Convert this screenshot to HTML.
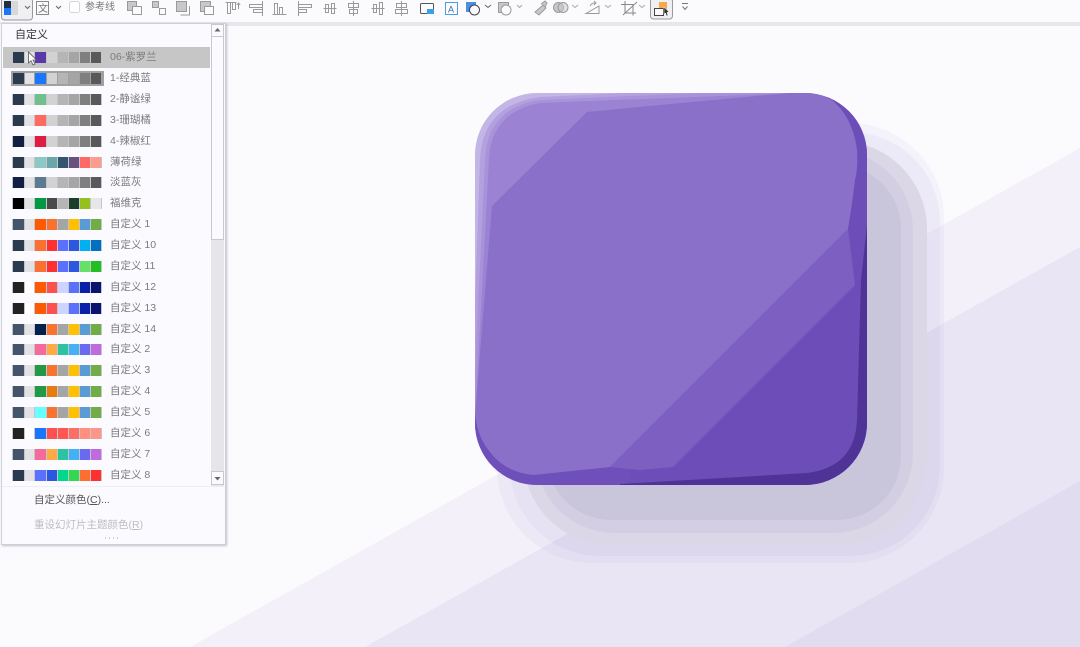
<!DOCTYPE html>
<html lang="zh">
<head>
<meta charset="utf-8">
<title>自定义主题颜色</title>
<style>
html,body{margin:0;padding:0;width:1080px;height:647px;overflow:hidden;background:#fbfafd;font-family:"Liberation Sans","Noto Sans CJK SC",sans-serif}
#art,#tb{position:absolute;left:0;top:0}
#tb{filter:blur(.3px)}
#panel{position:absolute;left:1px;top:23px;width:223px;height:520px;background:#fbfaff;border:1px solid #cfcfd8;box-shadow:1px 1px 2px rgba(90,90,110,.35)}
.h{position:absolute;left:13px;top:3px;font-size:11px;color:#333;line-height:16px}
.hl{position:absolute;left:1px;top:23px;width:207px;height:21px;background:#c6c6c6}
.r{position:absolute;left:10px;width:90px;height:11px;background:#c4c4ca}
.r i{position:absolute;top:0;height:11px;display:block}
.r i:nth-child(1){left:1px;width:11px}
.r i:nth-child(2){left:13px;width:9px}
.r i:nth-child(3){left:23px;width:11px}
.r i:nth-child(4){left:35px;width:10px}
.r i:nth-child(5){left:46px;width:10px}
.r i:nth-child(6){left:57px;width:10px}
.r i:nth-child(7){left:68px;width:10px}
.r i:nth-child(8){left:79px;width:10px}
.r.sel{left:9px;width:93px;height:15px;margin-top:-2px;background:#a0a0a0}
.r.sel i{top:2px}
.r.sel i:nth-child(n){margin-left:1px}
.t{position:absolute;left:108px;font-size:10.5px;color:#7b7b7b;line-height:14px;white-space:nowrap}
#sb{position:absolute;left:209px;top:0;width:13px;height:462px;background:#e6e6ea}
#sb b{position:absolute;left:0;width:11px;background:#fbfaff;border:1px solid #c8c8ce;display:block}
.m{position:absolute;left:32px;font-size:10.5px;line-height:14px;white-space:nowrap;color:#555}
.m u{text-underline-offset:1px}
#sep{position:absolute;left:0;top:462px;width:223px;height:1px;background:#eeedf3}
#tb text{font-family:"Liberation Sans","Noto Sans CJK SC",sans-serif}
</style>
</head>
<body>
<svg id="art" width="1080" height="647" viewBox="0 0 1080 647">
<defs><clipPath id="c"><path d="M537 93H805A62 62 0 0 1 867 155V423A62 62 0 0 1 805 485H537A62 62 0 0 1 475 423V155A62 62 0 0 1 537 93Z"/></clipPath></defs>
<rect width="1080" height="647" fill="#fbfafd"/>
<polygon points="190,647 1080,148 1080,647" fill="#f3f0f9"/>
<polygon points="365,647 1080,247 1080,647" fill="#e9e5f4"/>
<polygon points="785,647 1080,481 1080,647" fill="#e2dcf0"/>
<rect x="497" y="123" width="447" height="440" rx="95" fill="#7a5abe" fill-opacity=".05"/>
<rect x="510" y="132" width="430" height="424" rx="90" fill="#7a5abe" fill-opacity=".05"/>
<rect x="523" y="141" width="404" height="404" rx="88" fill="#dbd7e6"/>
<rect x="535" y="150" width="378" height="383" rx="80" fill="#d4cee3"/>
<rect x="547" y="165" width="354" height="355" rx="64" fill="#c9c5db"/>
<g clip-path="url(#c)">
<rect x="470" y="88" width="402" height="402" fill="#c3b6e6"/>
<path d="M475 300L480 160Q482 105 540 97L623 93H880V500H475Z" fill="#b3a1df"/>
<path d="M475 370L485 160Q487 108 540 100L700 93H880V500H475Z" fill="#a892da"/>
<path d="M475 420L489 160Q491 112 540 103L800 93H880V500H475Z" fill="#9b82d2"/>
<polygon points="825,88 880,88 880,500 600,500" fill="#6d4eb9"/>
<rect x="470" y="415" width="160" height="80" fill="#6f50ba"/>
<path d="M492 206L587 112L660 105L800 92L815 92L832 100Q853 118 857 150Q858 170 855 180Q852 205 848 229L610 467L533 475Q505 472 490 452Q478 438 475 415Z" fill="#8b70ca"/>
<polygon points="610,467 848,229 855,285 673,467 640,470" fill="#7d5fc1"/>
<path d="M620 484L807 473Q855 467 857 420L861 280L867 225H880V500H620Z" fill="#4f3397"/>
</g>
</svg>

<svg id="tb" width="1080" height="27" viewBox="0 0 1080 27" fill="none" stroke="#9a9a9a" stroke-width="1">
<rect x="0" y="0" width="1080" height="22" fill="#fbfafd" stroke="none"/>
<rect x="226" y="22" width="854" height="4" fill="#e7e7eb" stroke="none"/>
<rect x="0" y="22" width="226" height="2" fill="#e7e7eb" stroke="none"/>
<rect x="1.500" y="-2" width="31" height="22" rx="3" fill="#f0f0f3" stroke="#9a9a9a"/>
<rect x="4" y="1" width="7" height="7" fill="#1f2f44" stroke="none"/>
<rect x="11" y="1" width="7" height="14" fill="#d8d8dc" stroke="none"/>
<rect x="4" y="8" width="7" height="7" fill="#1a75ff" stroke="none"/>
<path d="M25 6l2.500 2.500L30 6M56 6l2.500 2.500L61 6M485 5l3 2.500L491 5" stroke="#666"/>
<path d="M517 5l2.500 2.500L522 5M572 5l3 2.500L578 5M605 5l3 2.500L611 5M639 5l3 2.500L645 5" stroke="#aaa"/>
<rect x="36.500" y="1.500" width="12" height="13" stroke="#888"/>
<text x="38" y="12" font-size="10" fill="#777" stroke="none">文</text>
<rect x="69.500" y="1.500" width="10" height="11" rx="2" stroke="#d5d5d8" fill="#fff"/>
<text x="85" y="10" font-size="10" fill="#777" stroke="none">参考线</text>
<g fill="#c8c8c8">
<rect x="127.500" y="1.500" width="9" height="9"/><rect x="132.500" y="6.500" width="9" height="8" fill="#fbfafd"/>
<rect x="152.500" y="1.500" width="6" height="6"/><rect x="159.500" y="8.500" width="6" height="6" fill="#fbfafd"/>
<rect x="176.500" y="1.500" width="10" height="10"/><path d="M189.500 6v9h-9" fill="none"/>
<rect x="200.500" y="1.500" width="10" height="10"/><rect x="204.500" y="6.500" width="9" height="8" fill="#fbfafd"/>
</g>
<path d="M225.500 2.500h11M227.500 2.500v11h3v-11M232.500 2.500v7h3v-7M238.500 9V3M236.800 5l1.700-2 1.700 2"/>
<path d="M262.500 1v15M249.500 4.500h13v3h-13zM253.500 9.500h9v3h-9z"/>
<path d="M272.500 14.500h14M274.500 14.500v-11h3v11M279.500 14.500v-7h3v7"/>
<path d="M298.500 1v15M298.500 4.500h13v3h-13zM298.500 9.500h8v3h-8z"/>
<path d="M323.500 8.500h13M325.500 4.500h3v8h-3zM331.500 3.500h3v10h-3z"/>
<path d="M353.500 1v15M348.500 3.500h10v4h-10zM349.500 9.500h8v4h-8z" fill="#fbfafd"/>
<path d="M371.500 8.500h13M373.500 4.500h3v8h-3zM379.500 2.500h3v12h-3z" fill="#fbfafd"/>
<path d="M401.500 1v15M396.500 3.500h10v4h-10zM395.500 9.500h12v4h-12z" fill="#fbfafd"/>
<rect x="420.500" y="3.500" width="13" height="10" rx="1" stroke="#555"/>
<rect x="427" y="9" width="7" height="5" fill="#3aa0e8" stroke="none"/>
<rect x="445.500" y="2.500" width="12" height="12" stroke="#4a9ee0"/>
<text x="448" y="12.500" font-size="9" fill="#3c6ea8" stroke="none">A</text>
<rect x="466" y="2" width="10" height="10" fill="#4a90e2" stroke="none"/>
<circle cx="474.500" cy="10" r="5" stroke="#444" fill="#fbfafd"/>
<rect x="498.500" y="2.500" width="10" height="10" fill="#c8c8c8"/>
<circle cx="506" cy="10" r="5" fill="#fbfafd"/>
<path d="M535 12l8-7 3 3-7 7zM541 4l4-3 2 2-2 4" fill="#c8c8c8"/>
<circle cx="558.500" cy="7.500" r="5" fill="#c8c8c8"/><circle cx="563" cy="7.500" r="5" fill="#c8c8c8" fill-opacity=".5"/>
<path d="M586 13.500L599 13.500V6zM590 6a6 6 0 0 1 6-3M594 1l2 2-2 2"/>
<path d="M625 1v12h11M621 4.500h12v11M623 15L637 2" stroke="#888"/>
<rect x="650.500" y="-2" width="22" height="21" rx="3" fill="#f0f0f2" stroke="#9a9a9a"/>
<rect x="659" y="2" width="8" height="8" fill="#f6a94a" stroke="none"/>
<rect x="654.500" y="8.500" width="9" height="7" stroke="#444" fill="#fbfafd"/>
<path d="M664 7l5 5-2 .5 1 3-1.500.5-1-3L664 14z" fill="#333" stroke="#fff" stroke-width=".5"/>
<path d="M682 3.500h6M682.500 6.500l2.500 3 2.500-3" stroke="#777"/>
</svg>

<div id="panel">
<div class="h">自定义</div>
<div class="hl"></div>

<div class="r" style="top:28px"><i style="background:#2b3a4d"></i><i style="background:#e2e2e4"></i><i style="background:#5b38a8"></i><i style="background:#d2d2d2"></i><i style="background:#b5b5b5"></i><i style="background:#a5a5a5"></i><i style="background:#7f7f7f"></i><i style="background:#595959"></i></div><div class="t" style="top:26px">06-紫罗兰</div>
<div class="r sel" style="top:49px"><i style="background:#2b3a4d"></i><i style="background:#e2e2e4"></i><i style="background:#1a75ff"></i><i style="background:#d2d2d2"></i><i style="background:#b5b5b5"></i><i style="background:#a5a5a5"></i><i style="background:#7f7f7f"></i><i style="background:#595959"></i></div><div class="t" style="top:47px">1-经典蓝</div>
<div class="r" style="top:70px"><i style="background:#2b3a4d"></i><i style="background:#e2e2e4"></i><i style="background:#70c08e"></i><i style="background:#d2d2d2"></i><i style="background:#b5b5b5"></i><i style="background:#a5a5a5"></i><i style="background:#7f7f7f"></i><i style="background:#595959"></i></div><div class="t" style="top:68px">2-静谧绿</div>
<div class="r" style="top:91px"><i style="background:#2b3a4d"></i><i style="background:#e2e2e4"></i><i style="background:#ff6a60"></i><i style="background:#d2d2d2"></i><i style="background:#b5b5b5"></i><i style="background:#a5a5a5"></i><i style="background:#7f7f7f"></i><i style="background:#595959"></i></div><div class="t" style="top:89px">3-珊瑚橘</div>
<div class="r" style="top:112px"><i style="background:#0f2040"></i><i style="background:#e2e2e4"></i><i style="background:#e01c42"></i><i style="background:#d2d2d2"></i><i style="background:#b5b5b5"></i><i style="background:#a5a5a5"></i><i style="background:#7f7f7f"></i><i style="background:#595959"></i></div><div class="t" style="top:110px">4-辣椒红</div>
<div class="r" style="top:133px"><i style="background:#2b3a4d"></i><i style="background:#e2e2e4"></i><i style="background:#8cc8c6"></i><i style="background:#68a8a8"></i><i style="background:#33566e"></i><i style="background:#6a5080"></i><i style="background:#ff6a66"></i><i style="background:#ff9a8e"></i></div><div class="t" style="top:131px">薄荷绿</div>
<div class="r" style="top:153px"><i style="background:#0f2040"></i><i style="background:#e2e2e4"></i><i style="background:#5d7a90"></i><i style="background:#d2d2d2"></i><i style="background:#b5b5b5"></i><i style="background:#a5a5a5"></i><i style="background:#7f7f7f"></i><i style="background:#595959"></i></div><div class="t" style="top:151px">淡蓝灰</div>
<div class="r" style="top:174px"><i style="background:#000"></i><i style="background:#e2e2e4"></i><i style="background:#009a44"></i><i style="background:#4a4a4a"></i><i style="background:#b5b5b5"></i><i style="background:#1c3f2c"></i><i style="background:#95c11f"></i><i style="background:#e7e7e7"></i></div><div class="t" style="top:172px">福维克</div>
<div class="r" style="top:195px"><i style="background:#44546a"></i><i style="background:#e2e2e4"></i><i style="background:#ff5a00"></i><i style="background:#f87230"></i><i style="background:#a5a5a5"></i><i style="background:#ffc000"></i><i style="background:#5b9bd5"></i><i style="background:#70ad47"></i></div><div class="t" style="top:193px">自定义 1</div>
<div class="r" style="top:216px"><i style="background:#2b3a4d"></i><i style="background:#e2e2e4"></i><i style="background:#fb7030"></i><i style="background:#ff3030"></i><i style="background:#5a70ff"></i><i style="background:#2a58e0"></i><i style="background:#00b0f0"></i><i style="background:#0070c0"></i></div><div class="t" style="top:214px">自定义 10</div>
<div class="r" style="top:237px"><i style="background:#2b3a4d"></i><i style="background:#e2e2e4"></i><i style="background:#fb7030"></i><i style="background:#ff3030"></i><i style="background:#5a70ff"></i><i style="background:#2a58e0"></i><i style="background:#66e066"></i><i style="background:#20c020"></i></div><div class="t" style="top:235px">自定义 11</div>
<div class="r" style="top:258px"><i style="background:#222"></i><i style="background:#fff"></i><i style="background:#ff5a00"></i><i style="background:#ff5050"></i><i style="background:#ccd4ff"></i><i style="background:#5a70ff"></i><i style="background:#0a20a8"></i><i style="background:#0a1470"></i></div><div class="t" style="top:256px">自定义 12</div>
<div class="r" style="top:279px"><i style="background:#222"></i><i style="background:#fff"></i><i style="background:#ff5a00"></i><i style="background:#ff5050"></i><i style="background:#ccd4ff"></i><i style="background:#5a70ff"></i><i style="background:#0a20a8"></i><i style="background:#0a1470"></i></div><div class="t" style="top:277px">自定义 13</div>
<div class="r" style="top:300px"><i style="background:#44546a"></i><i style="background:#e2e2e4"></i><i style="background:#002050"></i><i style="background:#f87230"></i><i style="background:#a5a5a5"></i><i style="background:#ffc000"></i><i style="background:#5b9bd5"></i><i style="background:#70ad47"></i></div><div class="t" style="top:298px">自定义 14</div>
<div class="r" style="top:320px"><i style="background:#44546a"></i><i style="background:#e2e2e4"></i><i style="background:#f56a9a"></i><i style="background:#ffaa44"></i><i style="background:#2cc4a0"></i><i style="background:#44b0f5"></i><i style="background:#6a6af0"></i><i style="background:#c06ae0"></i></div><div class="t" style="top:318px">自定义 2</div>
<div class="r" style="top:341px"><i style="background:#44546a"></i><i style="background:#e2e2e4"></i><i style="background:#229944"></i><i style="background:#f87230"></i><i style="background:#a5a5a5"></i><i style="background:#ffc000"></i><i style="background:#5b9bd5"></i><i style="background:#70ad47"></i></div><div class="t" style="top:339px">自定义 3</div>
<div class="r" style="top:362px"><i style="background:#44546a"></i><i style="background:#e2e2e4"></i><i style="background:#229944"></i><i style="background:#e67c10"></i><i style="background:#a5a5a5"></i><i style="background:#ffc000"></i><i style="background:#5b9bd5"></i><i style="background:#70ad47"></i></div><div class="t" style="top:360px">自定义 4</div>
<div class="r" style="top:383px"><i style="background:#44546a"></i><i style="background:#e2e2e4"></i><i style="background:#66ffff"></i><i style="background:#f87230"></i><i style="background:#a5a5a5"></i><i style="background:#ffc000"></i><i style="background:#5b9bd5"></i><i style="background:#70ad47"></i></div><div class="t" style="top:381px">自定义 5</div>
<div class="r" style="top:404px"><i style="background:#222"></i><i style="background:#fff"></i><i style="background:#1a75ff"></i><i style="background:#ff5050"></i><i style="background:#ff5555"></i><i style="background:#ff6e66"></i><i style="background:#ff9080"></i><i style="background:#ff9488"></i></div><div class="t" style="top:402px">自定义 6</div>
<div class="r" style="top:425px"><i style="background:#44546a"></i><i style="background:#e2e2e4"></i><i style="background:#f56a9a"></i><i style="background:#ffaa44"></i><i style="background:#2cc4a0"></i><i style="background:#44b0f5"></i><i style="background:#6a6af0"></i><i style="background:#c06ae0"></i></div><div class="t" style="top:423px">自定义 7</div>
<div class="r" style="top:446px"><i style="background:#2b3a4d"></i><i style="background:#e2e2e4"></i><i style="background:#5a70ff"></i><i style="background:#2a58e0"></i><i style="background:#00d890"></i><i style="background:#33d850"></i><i style="background:#fb7030"></i><i style="background:#ff3030"></i></div><div class="t" style="top:444px">自定义 8</div>

<div id="sb">
<b style="top:0;height:11px"></b>
<b style="top:12px;height:202px"></b>
<b style="top:447px;height:12px"></b>
<svg style="position:absolute;left:0;top:0" width="13" height="462"><path d="M3.500 7.500L6.500 4L9.500 7.500Z" fill="#666"/><path d="M3.500 453L6.500 456.500L9.500 453Z" fill="#666"/></svg>
</div>
<div id="sep"></div>
<div class="m" style="top:469px">自定义颜色(<u>C</u>)...</div>
<div class="m" style="top:494px;color:#bdbdc2">重设幻灯片主题颜色(<u>R</u>)</div>
<svg style="position:absolute;left:102px;top:512px" width="18" height="4"><path d="M1 2h1M5 2h1M9 2h1M13 2h1" stroke="#aaa"/></svg>
<svg style="position:absolute;left:25px;top:27px" width="12" height="16"><path d="M1.500 1L1.500 12L4 9.800L6 14L8 13L6 9L9.500 9Z" fill="#fff" stroke="#555" stroke-width=".8"/></svg>
</div>
</body>
</html>
